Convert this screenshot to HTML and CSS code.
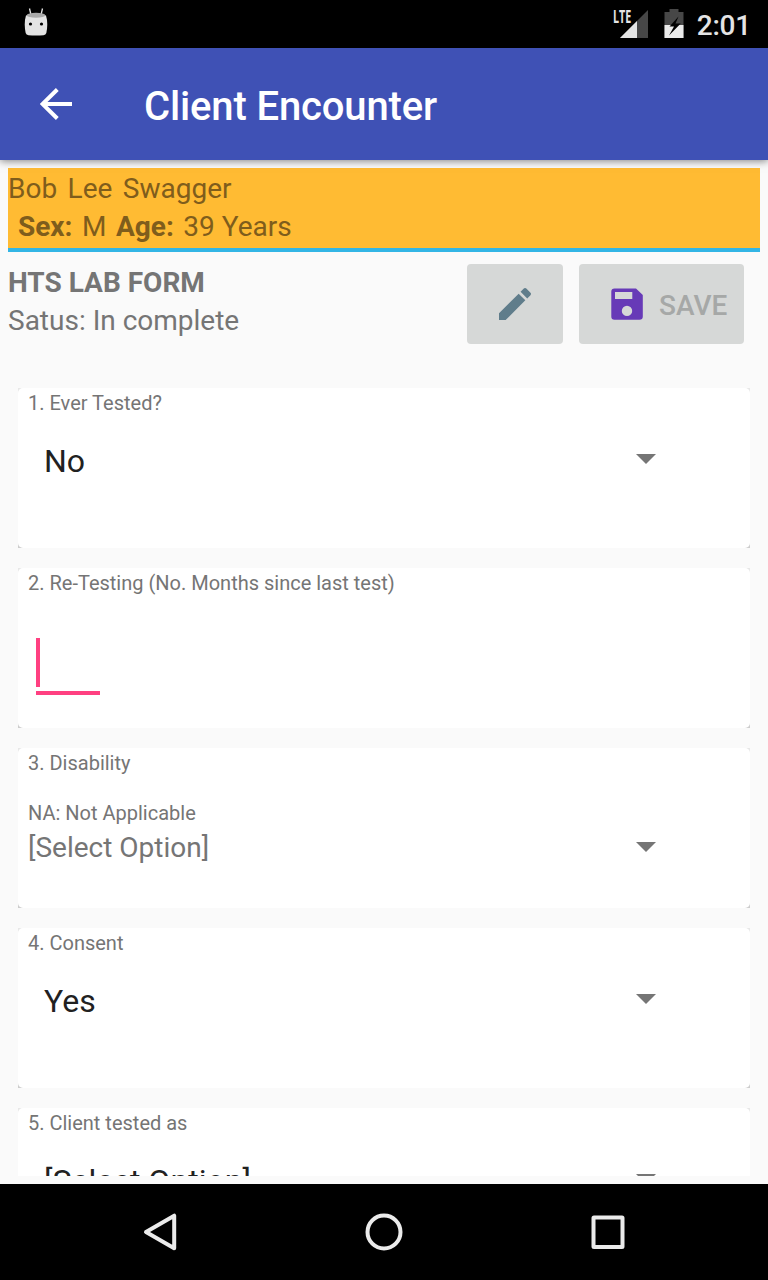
FILE: index.html
```html
<!DOCTYPE html>
<html lang="en">
<head>
<meta charset="utf-8">
<title>Client Encounter</title>
<link rel="stylesheet" href="styles.css">
</head>
<body>
<div class="screen">
  <header class="status-bar">
    <svg class="droid" width="24" height="30" viewBox="0 0 24 30">
      <path d="M5.500 .500 6.800 6M18.500 .500 17.200 6" stroke="#e4e4e4" stroke-width="1.300"/>
      <path d="M2 7.500Q12 4 22 7.500C23.800 13 23.500 20 22.300 25Q21.800 26.800 19.500 27.200Q12 28 4.500 27.200Q2.200 26.800 1.700 25C.5 20 .2 13 2 7.500Z" fill="#e4e4e4"/>
      <ellipse cx="12" cy="7.300" rx="9.300" ry="2.500" fill="#a9a9a9"/>
      <circle cx="6.500" cy="16" r="1.600"/><circle cx="17.500" cy="16" r="1.600"/>
    </svg>
    <div class="indicators">
      <div class="signal">
        <span class="lte">LTE</span>
        <svg width="28" height="28" viewBox="0 0 28 28"><path d="M28 0V28H0Z" fill="#474747"/><path d="M17 11V28H0Z" fill="#e4e4e4"/></svg>
      </div>
      <svg class="battery" width="20" height="30" viewBox="0 0 20 30">
        <path d="M5.500 1H14.500V4H19.500V30H.500V4H5.500Z" fill="#474747"/>
        <path d="M.500 17H19.500V30H.500Z" fill="#ebebeb"/>
        <path d="M14.500 8.500 5.500 18.500H10L5 27.500 16.700 15.500H11.500Z"/>
      </svg>
      <span class="clock">2:01</span>
    </div>
  </header>

  <div class="toolbar">
    <svg class="back" width="32" height="32" viewBox="0 0 32 32"><path d="M32 16H3M17.300 1.500 2.500 16 17.300 30.500" fill="none" stroke="#fff" stroke-width="4"/></svg>
    <h1 class="title">Client Encounter</h1>
  </div>

  <main class="content">
    <section class="client">
      <p class="client-name">Bob Lee Swagger</p>
      <p class="client-meta"><b>Sex:</b><span class="sex">M</span><b>Age:</b><span class="age">39 Years</span></p>
    </section>

    <section class="form-head">
      <div class="form-info">
        <p class="form-title">HTS LAB FORM</p>
        <p class="form-status">Satus: In complete</p>
      </div>
      <button class="btn btn-edit" aria-label="Edit">
        <svg width="32" height="32" viewBox="3 3 18 18"><path fill="#607d8b" d="M3 17.250V21h3.750L17.810 9.940l-3.750-3.750L3 17.250zM20.710 7.040c.39-.39.39-1.020 0-1.410l-2.340-2.340c-.39-.39-1.020-.39-1.410 0l-1.830 1.830 3.750 3.750 1.830-1.830z"/></svg>
      </button>
      <button class="btn btn-save">
        <svg width="32" height="32" viewBox="0 0 32 32"><path fill="#673ab7" fill-rule="evenodd" d="M3.500.500H25L31.800 7V28.500Q31.800 31.800 28.500 31.800H3.500Q.300 31.800.300 28.500V3.700Q.300.500 3.500.500ZM4 4V11H21.300V4ZM16 17.700A5.200 5.200 0 1 0 16 28.100A5.200 5.200 0 1 0 16 17.700Z"/></svg>
        <span>SAVE</span>
      </button>
    </section>

    <div class="questions">
      <section class="card"><div class="card-body">
        <p class="label">1. Ever Tested?</p>
        <div class="spinner"><span>No</span><i class="caret"></i></div>
      </div></section>
      <section class="card"><div class="card-body">
        <p class="label">2. Re-Testing (No. Months since last test)</p>
        <div class="input"><i class="cursor"></i></div>
      </div></section>
      <section class="card"><div class="card-body">
        <p class="label">3. Disability</p>
        <p class="hint">NA: Not Applicable</p>
        <div class="spinner spinner-multi"><span>[Select Option]</span><i class="caret"></i></div>
      </div></section>
      <section class="card"><div class="card-body">
        <p class="label">4. Consent</p>
        <div class="spinner"><span>Yes</span><i class="caret"></i></div>
      </div></section>
      <section class="card"><div class="card-body">
        <p class="label">5. Client tested as</p>
        <div class="spinner"><span>[Select Option]</span><i class="caret"></i></div>
      </div></section>
    </div>
  </main>

  <nav class="nav-bar">
    <svg width="40" height="40" viewBox="0 0 40 40"><path d="M34.200 3.700V36.300L6 20Z"/></svg>
    <svg width="40" height="40" viewBox="0 0 40 40"><circle cx="20" cy="20" r="16.500"/></svg>
    <svg width="40" height="40" viewBox="0 0 40 40"><rect x="5.500" y="5.500" width="29" height="29.500" rx=".5"/></svg>
  </nav>
</div>
</body>
</html>
```
FILE: styles.css
```css
* { box-sizing: border-box; }
body { margin: 0; font-family: Roboto, sans-serif; }
p, h1 { margin: 0; }
svg { display: block; flex: none; }

.screen {
  width: 768px;
  height: 1280px;
  display: flex;
  flex-direction: column;
  overflow: hidden;
  background: #fafafa;
  color: #757575;
}

.status-bar {
  height: 48px;
  flex: none;
  display: flex;
  justify-content: space-between;
  padding: 8px 17px 0 24px;
  background: #000;
}
.indicators { display: flex; }
.signal { position: relative; padding: 2px 0 0 7px; margin-right: 16px; }
.lte {
  position: absolute;
  left: 0;
  top: 0;
  font: 700 17px/17px "Open Sans", sans-serif;
  color: #e4e4e4;
  transform: scaleX(.63);
  transform-origin: 0 0;
}
.clock { margin-left: 13px; padding-top: 1px; font-size: 28px; line-height: 34px; font-weight: 500; letter-spacing: -.2px; color: #e4e4e4; }

.toolbar {
  height: 112px;
  flex: none;
  display: flex;
  align-items: center;
  padding-left: 40px;
  background: #3f51b5;
  box-shadow: 0 1px 8px rgba(0, 0, 0, .5);
  z-index: 1;
}
.title { margin-left: 72px; padding-top: 5px; font-size: 40px; line-height: 48px; font-weight: 500; letter-spacing: -.14px; color: #fff; }

.content { flex: 1; min-height: 0; padding: 8px; display: flex; flex-direction: column; }

.client {
  height: 84px;
  flex: none;
  padding-top: 2px;
  background: #ffbb33;
  border-bottom: 4px solid #33b5e5;
  color: #7f5d1c;
  font-size: 28px;
  line-height: 38px;
}
.client-name { word-spacing: 3.500px; }
.client-meta { padding-left: 10px; display: flex; }
.sex { margin: 0 9.500px; }
.age { margin-left: 9.500px; }

.form-head { height: 120px; flex: none; display: flex; padding: 12px 16px 0 0; font-size: 28px; line-height: 38px; }
.form-info { flex: 1; }
.form-title { font-weight: 700; }
.btn {
  height: 80px;
  border: 0;
  border-radius: 4px;
  padding: 0;
  background: #d6d8d7;
  color: #a6a8a7;
  display: flex;
  align-items: center;
  font: 500 28px/34px Roboto, sans-serif;
}
.btn-edit { width: 96px; justify-content: center; margin-right: 16px; }
.btn-save { width: 165px; padding-left: 32px; gap: 16px; }
.btn-save span { padding-top: 3px; }

.questions {
  flex: 1;
  min-height: 0;
  overflow: hidden;
  display: flex;
  flex-direction: column;
  gap: 20px;
  padding: 16px 10px 0;
}
.card { height: 160px; flex: none; background: linear-gradient(#e8e8e8, #cdcdcd); }
.card-body { height: 160px; padding: 2px 10px 0; border-radius: 5px; background: #fff; }
.label, .hint { font-size: 20px; line-height: 27px; }
.hint { margin-top: 23px; }
.spinner {
  display: flex;
  justify-content: space-between;
  align-items: center;
  height: 48px;
  margin-top: 20px;
  padding: 0 84px 0 16px;
  font-size: 32px;
  line-height: 48px;
  color: #212121;
}
.spinner .caret { margin-bottom: 4px; }
.spinner-multi { height: 42px; line-height: 42px; margin-top: 0; padding-left: 0; font-size: 28px; color: #757575; }
.spinner-multi .caret { margin-bottom: 2px; }
.caret { width: 20px; height: 10px; background: #757575; clip-path: polygon(0 0, 100% 0, 50% 100%); }
.input { width: 64px; height: 57px; margin: 41px 0 0 8px; border-bottom: 4px solid #ff4081; }
.cursor { display: block; width: 4px; height: 49px; background: #ff4081; }

.nav-bar { height: 96px; flex: none; display: flex; justify-content: center; align-items: center; gap: 184px; background: #000; }
.nav-bar svg { fill: none; stroke: #ebebeb; stroke-width: 4; stroke-linejoin: round; }
```
